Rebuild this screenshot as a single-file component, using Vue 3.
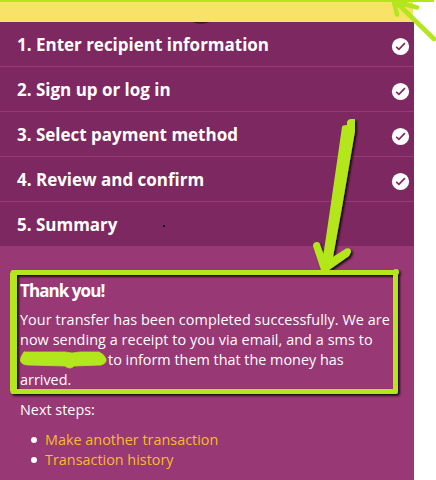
<script setup>
const steps = [
  { title: '1. Enter recipient information', done: true },
  { title: '2. Sign up or log in', done: true },
  { title: '3. Select payment method', done: true },
  { title: '4. Review and confirm', done: true },
  { title: '5. Summary', done: false },
]
const links = ['Make another transaction', 'Transaction history']
</script>

<template>
  <main class="page">
    <div class="banner"></div>
    <ol class="steps">
      <li v-for="step in steps" :key="step.title" class="step">
        <span class="title">{{ step.title }}</span>
        <svg v-if="step.done" class="check" viewBox="0 0 17 17">
          <circle cx="8.5" cy="8.5" r="8.6" fill="#fff" />
          <path d="M4.2 8.9 6.9 11.4 12.9 5.1" fill="none" stroke="#7e2861" stroke-width="1.6" />
        </svg>
      </li>
    </ol>
    <section class="summary">
      <h2>Thank you!</h2>
      <p class="message">
        <span class="line wide">Your transfer has been completed successfully. We are</span>
        <span class="line wide">now sending a receipt to you via email, and a sms to</span>
        <span class="line redacted">to inform them that the money has</span>
        <span class="line">arrived.</span>
      </p>
      <p class="next">Next steps:</p>
      <ul class="links">
        <li v-for="link in links" :key="link"><a>{{ link }}</a></li>
      </ul>
    </section>

    <svg class="marks" viewBox="0 0 436 480" fill="none" stroke="#b4e61d" stroke-linecap="round" stroke-linejoin="round">
      <defs>
        <filter id="shade" x="-20%" y="-20%" width="140%" height="140%">
          <feDropShadow dx="1.8" dy="1.8" stdDeviation="1.2" flood-color="#000" flood-opacity="0.85" />
        </filter>
        <clipPath id="below"><rect x="180" y="22" width="40" height="10" /></clipPath>
      </defs>
      <ellipse cx="201" cy="20.5" rx="9" ry="3.2" fill="#3a1630" stroke="none" clip-path="url(#below)" />
      <rect x="163" y="225" width="2" height="2" fill="#1c0916" stroke="none" />
      <path d="M0 1H434" stroke-width="2" stroke-linecap="butt" />
      <path d="M396 2 434 39M394 2 397 14.5M396 2 417 7.5" stroke-width="4.6" />
      <path d="M391 0H410L404 5L394 8Z" fill="#b4e61d" stroke="none" />
      <g filter="url(#shade)">
        <path d="M13 272.5H395.5V391.5H13Z" stroke-width="5" />
        <path d="M13.5 273V391" stroke-width="7" stroke-linecap="butt" />
        <circle cx="396" cy="272" r="3" fill="#b4e61d" stroke="none" />
        <path d="M342 127Q342 125 347 125V122Q348 119 351 119H355V131L341.5 210 333 257 346 248.5Q351 247 351 252L349 256 329 270Q324 273 321 270L313 246Q313 242 317 242Q320 242 320.5 246L323.5 254 330 210Z" fill="#b4e61d" stroke="none" />
      </g>
      <path d="M24 352Q20 357 20.5 361Q22 365 28 365L65 366Q70 370 74 366L101 365Q107 363 106 359Q104 354 99 352H80L72 353 65 352H26Z" fill="#b4e61d" stroke="#b4e61d" stroke-width="0.8" />
    </svg>
  </main>
</template>

<style>
body {
  background: #fff;
  overflow: hidden;
}
</style>

<style scoped>
.page {
  position: relative;
  width: 436px;
  height: 480px;
  overflow: hidden;
  display: flex;
  flex-direction: column;
  background: #fff;
  font-family: "Open Sans", "Noto Sans", sans-serif;
  color: #fff;
}
.banner {
  width: 413px;
  height: 22px;
  flex: none;
  background: #f8e267;
}
.steps {
  width: 414px;
  margin: 0;
  padding: 0;
  list-style: none;
  background: #7e2861;
}
.step {
  box-sizing: border-box;
  height: 45px;
  display: flex;
  align-items: flex-start;
  justify-content: space-between;
  padding: 0 5px 0 17px;
  border-bottom: 1px solid #983875;
}
.step:last-child {
  height: 44px;
  border-bottom: 0;
}
.title {
  margin-top: 10px;
  font-size: 17px;
  line-height: 25px;
  font-weight: 700;
  letter-spacing: -0.01px;
  white-space: nowrap;
}
.check {
  width: 17px;
  height: 17px;
  margin-top: 16px;
  overflow: visible;
}
.summary {
  box-sizing: border-box;
  width: 414px;
  flex: 1;
  padding: 33px 0 0 20px;
  background: #983875;
  font-size: 14.4px;
  line-height: 20px;
}
h2 {
  margin: 0 0 7px;
  font-size: 17px;
  line-height: 24px;
  font-weight: 700;
  letter-spacing: -0.93px;
}
p {
  margin: 0;
}
.line {
  display: block;
  white-space: nowrap;
}
.wide {
  letter-spacing: 0.065px;
}
.redacted {
  padding-left: 88px;
}
.next {
  margin-top: 10px;
}
.links {
  margin: 10px 0 0;
  padding-left: 11px;
  list-style: none;
}
.links li {
  display: flex;
  align-items: center;
  gap: 8px;
}
.links li::before {
  content: "";
  width: 6px;
  height: 6px;
  border-radius: 50%;
  background: #fff;
}
.links a {
  color: #f5bd2b;
}
.marks {
  position: absolute;
  left: 0;
  top: 0;
  width: 436px;
  height: 480px;
}
</style>
